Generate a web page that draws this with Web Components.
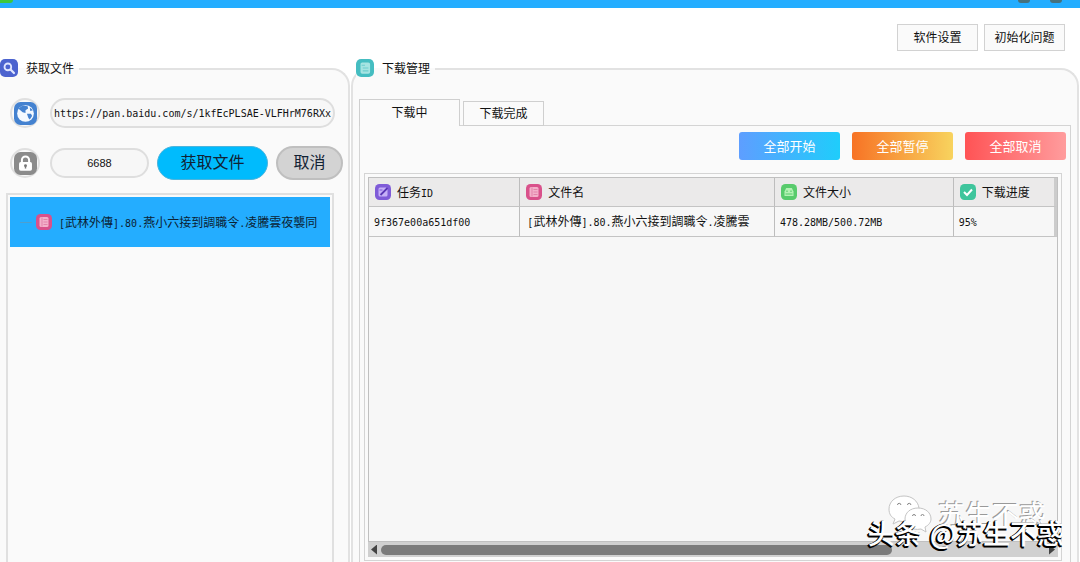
<!DOCTYPE html>
<html lang="zh-CN">
<head>
<meta charset="utf-8">
<title>下载管理</title>
<style>
html,body{height:100%}
body{margin:0;background:#fff;overflow:hidden;font:12px/16px "Noto Sans CJK SC",sans-serif;color:#222}
</style>
</head>
<body>
<download-app></download-app>
<script>
const define=(name,html,setup)=>customElements.define(name,class extends HTMLElement{
  constructor(){
    super();
    const t=document.createElement('template');
    t.innerHTML=html;
    this.attachShadow({mode:'open'}).append(t.content.cloneNode(true));
  }
  connectedCallback(){setup&&setup(this,this.shadowRoot)}
});

const icons={
  search:['#4c63cf','<circle cx="7" cy="7" r="3" fill="none" stroke="#dfe5ff" stroke-width="1.6"/><path d="M9.4 9.4 12.4 12.4" stroke="#dfe5ff" stroke-width="2" stroke-linecap="round"/>'],
  doc:['#45bdc1','<rect x="4" y="3" width="8.500" height="10" rx="1.500" fill="#a6e4e2"/><path d="M5 5.500h3M6 8h5M6 10.500h5" stroke="#6dcdcd"/>'],
  globe:['#4482d0','<circle cx="8" cy="8" r="5.800" fill="#f4f9ff"/><path d="M3 4.500 6 2.400 9.500 3 9.800 4.600 8 5.800 8 7.600 6 7.200 4.800 6z" fill="#4482d0"/><path d="M9 8.200 11.800 8.200 12.600 9.800 11 12.200 10 11.200z" fill="#4482d0"/><path d="M11 3.800l2.200 1.900-1.900.5z" fill="#4482d0"/>'],
  lock:['#8b8b8b','<path d="M5.500 7.500V5.600a2.500 2.500 0 0 1 5 0v1.900" fill="none" stroke="#fff" stroke-width="1.400"/><rect x="3.500" y="7" width="9" height="6" rx="1.200" fill="#fff"/><circle cx="8" cy="9.500" r="1" fill="#777"/><path d="M8 9.500v2" stroke="#777"/>'],
  list:['#d9518b','<rect x="3.500" y="3" width="9" height="10" rx="1.500" fill="#f3b0ca"/><path d="M6 3.500v9M7.500 5.500h4M7.500 8h4M7.500 10.500h4" stroke="#e283aa"/>'],
  edit:['#7f5bd8','<rect x="3.500" y="3.500" width="9" height="9" rx="1.500" fill="#c6b0f7"/><path d="M5.500 11 12.500 4" stroke="#5936b5" stroke-width="1.800"/><path d="M4.500 6h3" stroke="#7f5bd8"/>'],
  disk:['#58cb6c','<path d="M3.500 7.500 5.200 4h5.600l1.700 3.500V12h-9z" fill="#b4f2b4"/><path d="M4.500 10h7M6 6.500v1.500M10 6.500v1.500" stroke="#58cb6c" stroke-width="1.200"/>'],
  check:['#3fc59c','<path d="m4 8 3 3 5-5.500" fill="none" stroke="#fff" stroke-width="2"/>']
};
define('app-icon',`<style>:host{display:block;width:16px;height:16px;flex:none}svg{display:block;width:100%;height:100%}</style><svg viewBox="0 0 16 16" aria-hidden="true"></svg>`,(h,r)=>{
  const [c,p]=icons[h.getAttribute('name')];
  r.querySelector('svg').innerHTML=`<rect width="16" height="16" rx="4.500" fill="${c}"/>${p}`;
});

define('title-bar',`<style>
:host{display:flex;height:8px;background:#24adff;overflow:hidden;justify-content:space-between;align-items:flex-start}
i{width:13px;height:3px;background:#3ec83e;border-radius:0 0 3px 0}
div{display:flex;gap:20px;padding-right:18px}
button{width:12px;height:3px;padding:0;border:0;border-radius:0 0 6px 6px;background:#46717d}
</style><i></i><div><button aria-label="最小化"></button><button aria-label="关闭"></button></div>`);

define('group-box',`<style>
:host{display:flex;flex-direction:column;min-width:0;min-height:0}
header{display:flex;height:20px;z-index:1;position:relative}
header span{display:flex;align-items:center;gap:8px;padding-right:5px;background:linear-gradient(#fff 50%,#fafafa 50%)}
::slotted(app-icon){width:18px;height:18px}
h2{margin:0;font:inherit;color:#111}
section{box-sizing:border-box;flex:1;min-height:0;display:flex;flex-direction:column;border:2px solid #e2e2e2;border-bottom:0;border-radius:18px 18px 0 0;margin-top:-10px;background:#fafafa}
:host([flush]) section{border-left:0;border-top-left-radius:0}
:host(:not([flush])) header{padding-left:5px}
</style><header><span><slot name="icon"></slot><h2></h2></span></header><section><slot></slot></section>`,(h,r)=>{
  r.querySelector('h2').textContent=h.getAttribute('label');
});

define('fetch-form',`<style>
:host{display:block;padding:28px 5px 0 10px}
form{display:grid;grid-template-columns:30px minmax(0,1fr);gap:20px 10px}
label{box-sizing:border-box;width:30px;height:30px;border:2px solid #e0e0e0;border-radius:50%;display:grid;place-items:center}
label app-icon{width:23px;height:23px}
input{box-sizing:border-box;height:30px;border:2px solid #dedede;border-radius:15px;background:#f7f7f7;color:#111;outline:0;min-width:0}
#url{margin-right:8px;padding:0 2px;font:10px "DejaVu Sans Mono",monospace}
#code{flex:98;padding:0;text-align:center;font:11px "Liberation Sans",sans-serif}
div{display:flex;min-width:0}
button{box-sizing:border-box;height:34px;margin:-2px 0 -2px 8px;padding:0 0 4px;border-radius:17px;font:16px/24px "Noto Sans CJK SC",sans-serif;color:#123}
.go{flex:113;background:#00bbfd;border:1px solid #4cb4dc}
.no{flex:65;background:#d3d3d3;border:2px solid #bfbfbf}
</style><form onsubmit="return false"><label for="url" aria-label="链接"><app-icon name="globe"></app-icon></label><input id="url" value="https://pan.baidu.com/s/1kfEcPLSAE-VLFHrM76RXx">
<label for="code" aria-label="提取码"><app-icon name="lock"></app-icon></label><div><input id="code" value="6688"><button class="go">获取文件</button><button class="no" type="button">取消</button></div></form>`);

define('file-tree',`<style>
:host{display:block;flex:1;margin:15px 14px 0 6px;border:2px solid #e0e0e0;border-bottom:0;padding:2px;background:#fafafa;min-height:0}
ul{list-style:none;margin:0;padding:0}
li{display:flex;align-items:center;height:50px;padding-left:10px;background:#24adff;color:#0b2233;white-space:nowrap;overflow:hidden}
li::before{content:"";width:12px;margin-right:4px;border-top:1px solid #4f9fce}
app-icon{margin-right:7px}
b{font:10px "DejaVu Sans Mono",monospace}
</style><ul><li><app-icon name="list"></app-icon><span><b>[</b>武林外傳<b>].80.</b>燕小六接到調職令<b>.</b>凌騰雲夜襲同</span></li></ul>`);

define('tab-strip',`<style>
:host{display:flex;align-items:flex-end;gap:3px;margin:0 0 -1px;height:27px}
button{box-sizing:border-box;border:1px solid #cfcfcf;background:#fafafa;font:12px/16px "Noto Sans CJK SC",sans-serif;color:#111;padding:0 0 2px;width:81px;height:25px}
button[aria-selected=true]{width:101px;height:27px;border-bottom:0;padding-bottom:2px}
</style><button role="tab" aria-selected="true">下载中</button><button role="tab" aria-selected="false">下载完成</button>`);

define('bulk-actions',`<style>
:host{display:flex;justify-content:flex-end;gap:12px;padding:6px 4px 13px 0}
button{width:101px;height:28px;border:0;border-radius:3px;color:#fff;font:13px/20px "Noto Sans CJK SC",sans-serif;padding:0}
.s{background:linear-gradient(90deg,#5e9eff,#1fcdfb)}.p{background:linear-gradient(90deg,#f77325,#f8d35e)}.c{background:linear-gradient(90deg,#ff5355,#ff9c9d)}
</style><button class="s">全部开始</button><button class="p">全部暂停</button><button class="c">全部取消</button>`);

define('task-table',`<style>
:host{display:flex;flex:1;min-height:0;flex-direction:column;box-sizing:border-box;margin:0 8px 1px 4px;border:1px solid #d4d4d4;padding:3px}
.view{flex:1;min-height:0;border:1px solid #c0c0c0;background:#f7f7f7}
table{width:100%;border-collapse:separate;border-spacing:0;table-layout:fixed}
th,td{box-sizing:border-box;border-right:1px solid #bdbdbd;border-bottom:1px solid #c4c4c4;height:30px;padding:0 5px 1px;text-align:left;font-weight:400;color:#111;white-space:nowrap;overflow:hidden}
th:last-child,td:last-child{border-right:3px solid #cccccc}
th{background:#ebeaea;height:29px;padding:0 6px 1px}
th div{display:flex;align-items:center;gap:6px}
td:nth-child(2){padding-left:7px}
b{font:10px "DejaVu Sans Mono",monospace}
.bar{display:flex;align-items:center;height:15px;padding:0 3px;gap:4px;background:#d0d0d0}
.track{flex:1}.thumb{width:77%;height:10px;border-radius:5px;background:#7b7b7b}
.bar button{width:6px;height:10px;border:0;padding:0;background:#444;clip-path:polygon(0 50%,100% 0,100% 100%)}
.bar button:last-child{clip-path:polygon(0 0,100% 50%,0 100%)}
</style><div class="view"><table><colgroup><col style="width:22%"><col style="width:37%"><col style="width:26%"><col></colgroup>
<thead><tr><th><div><app-icon name="edit"></app-icon><span>任务<b>ID</b></span></div></th><th><div><app-icon name="list"></app-icon>文件名</div></th><th><div><app-icon name="disk"></app-icon>文件大小</div></th><th><div><app-icon name="check"></app-icon>下载进度</div></th></tr></thead>
<tbody><tr><td><b>9f367e00a651df00</b></td><td><b>[</b>武林外傳<b>].80.</b>燕小六接到調職令<b>.</b>凌騰雲</td><td><b>478.28MB/500.72MB</b></td><td><b>95%</b></td></tr></tbody></table></div>
<div class="bar"><button aria-label="向左"></button><div class="track"><div class="thumb"></div></div><button aria-label="向右"></button></div>`);

define('water-mark',`<style>
:host{position:absolute;right:16px;bottom:13px;color:#fff;pointer-events:none;white-space:nowrap}
div{display:flex;justify-content:flex-end;align-items:center;gap:6px;margin-right:18px;font-size:27px;line-height:28px;text-shadow:-1px -1px 0 #999}
p{display:flex;justify-content:flex-end;gap:8px;margin:-12px 0 0;font-size:27px;line-height:32px;font-weight:500;text-shadow:-2px 1px 0 #000,-1px 0 0 #000,-1px 2px 0 #000}
svg{width:44px;height:38px;margin:-4px 0}
</style><div><svg viewBox="0 0 44 38" aria-hidden="true"><g fill="#fff" stroke="#c4c4c4"><path d="M16 1C7 1 1 7 1 14c0 5 2 8 6 10l-2 5 6-3c13 3 21-4 20-13C30 6 24 1 16 1z"/><path d="M30 13c-8 0-13 5-13 11s6 12 16 10l5 3-1-5c4-2 6-5 6-8 0-6-5-11-13-11z"/></g><g fill="none" stroke="#888"><path d="M9.500 10a1.700 1.700 0 0 1 3.400 0M19.500 10a1.700 1.700 0 0 1 3.400 0M24.500 21a1.500 1.500 0 0 1 3 0M33 21a1.500 1.500 0 0 1 3 0"/></g></svg><span>苏生不惑</span></div><p><span>头条</span><span>@苏生不惑</span></p>`);

define('download-app',`<style>
:host{display:flex;flex-direction:column;height:100vh;position:relative;overflow:hidden}
nav{display:flex;justify-content:flex-end;gap:6px;padding:16px 15px 7px}
nav button{box-sizing:border-box;width:81px;height:27px;padding:0 0 2px;border:1px solid #d2d2d2;background:#fafafa;color:#111;font:12px/16px "Noto Sans CJK SC",sans-serif}
main{display:grid;grid-template-columns:350px minmax(0,1fr);gap:1px;flex:1;min-height:0;padding-right:1px}
.tabs{display:flex;flex-direction:column;flex:1;min-height:0;padding:29px 6px 0}
.panel{display:flex;flex-direction:column;flex:1;min-height:0;border:1px solid #d4d4d4;border-bottom:0}
tab-strip{z-index:1}
</style><title-bar></title-bar><nav><button>软件设置</button><button>初始化问题</button></nav>
<main><group-box flush label="获取文件"><app-icon slot="icon" name="search"></app-icon><fetch-form></fetch-form><file-tree></file-tree></group-box>
<group-box label="下载管理"><app-icon slot="icon" name="doc"></app-icon><div class="tabs"><tab-strip role="tablist"></tab-strip><div class="panel"><bulk-actions></bulk-actions><task-table></task-table></div></div></group-box></main>
<water-mark></water-mark>`);
</script>
</body>
</html>
